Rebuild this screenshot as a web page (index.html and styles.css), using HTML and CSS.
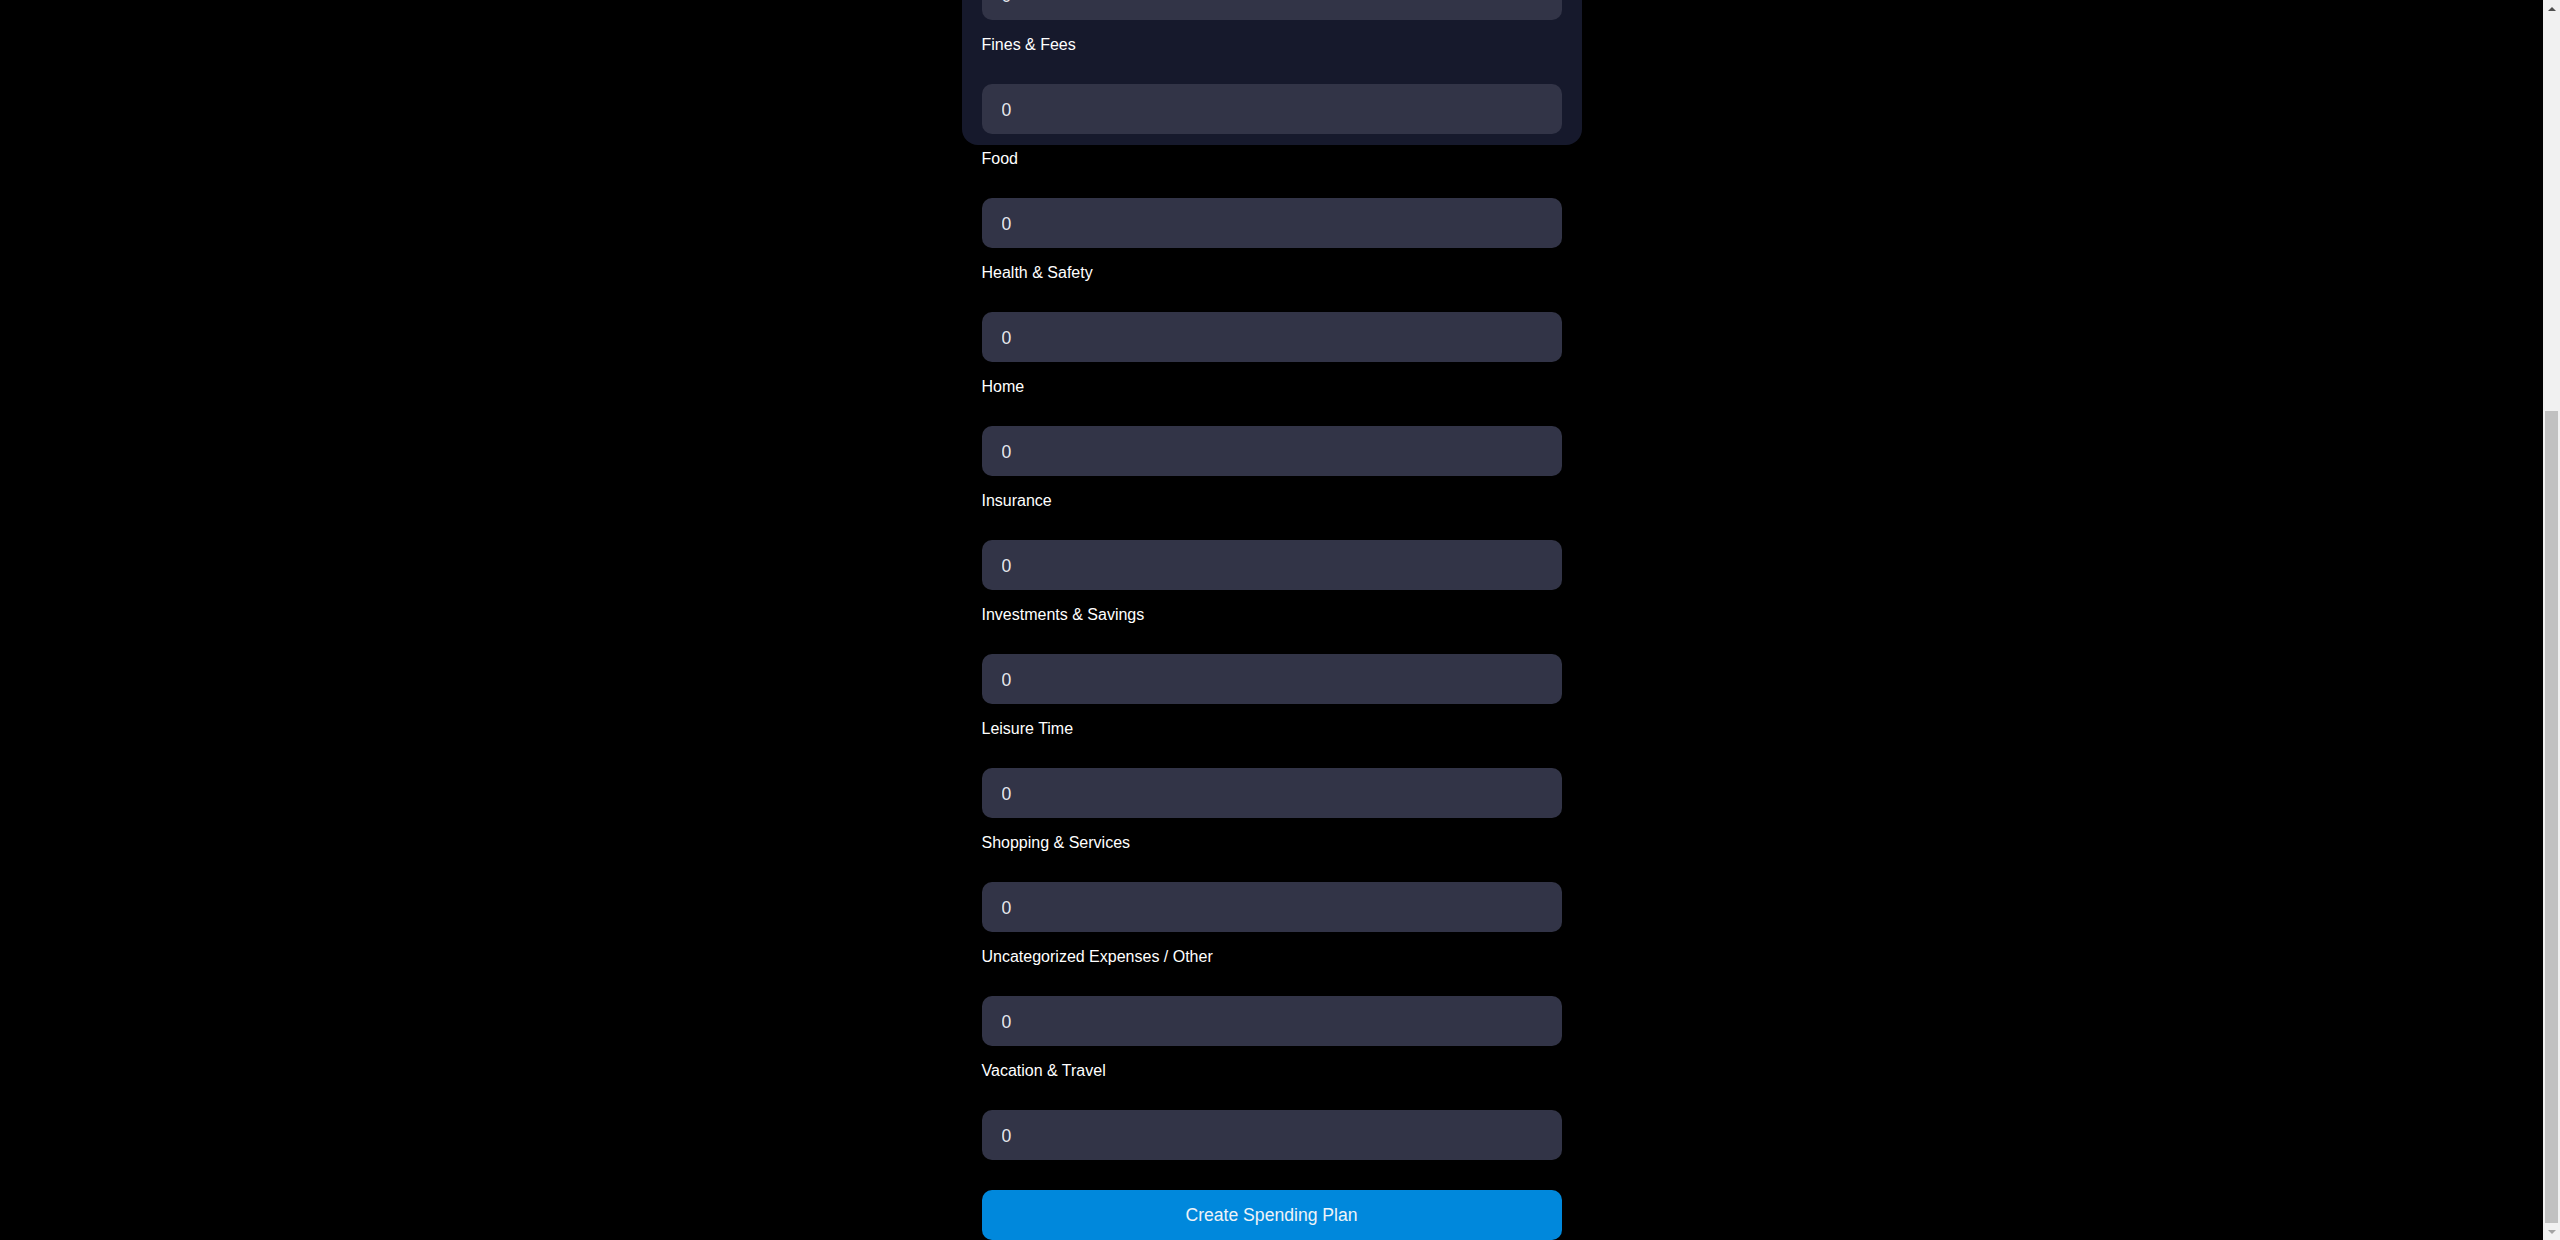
FILE: index.html
```html
<!DOCTYPE html>
<html lang="en">
<head>
<meta charset="utf-8">
<title>Spending Plan</title>
<link rel="stylesheet" href="styles.css">
</head>
<body>
<div class="viewport">
  <main class="page">
    <section class="card">
      <form class="plan-form">
        <div class="field field-partial"><input class="field-input" type="text" value="0" aria-label="Entertainment"></div>
        <div class="field"><label class="field-label">Fines &amp; Fees</label><input class="field-input" type="text" value="0"></div>
        <div class="field"><label class="field-label">Food</label><input class="field-input" type="text" value="0"></div>
        <div class="field"><label class="field-label">Health &amp; Safety</label><input class="field-input" type="text" value="0"></div>
        <div class="field"><label class="field-label">Home</label><input class="field-input" type="text" value="0"></div>
        <div class="field"><label class="field-label">Insurance</label><input class="field-input" type="text" value="0"></div>
        <div class="field"><label class="field-label">Investments &amp; Savings</label><input class="field-input" type="text" value="0"></div>
        <div class="field"><label class="field-label">Leisure Time</label><input class="field-input" type="text" value="0"></div>
        <div class="field"><label class="field-label">Shopping &amp; Services</label><input class="field-input" type="text" value="0"></div>
        <div class="field"><label class="field-label">Uncategorized Expenses / Other</label><input class="field-input" type="text" value="0"></div>
        <div class="field"><label class="field-label">Vacation &amp; Travel</label><input class="field-input" type="text" value="0"></div>
        <button class="submit-btn" type="button">Create Spending Plan</button>
      </form>
    </section>
  </main>
</div>
<div class="scrollbar" aria-hidden="true">
  <div class="sb-btn"><span class="sb-arrow sb-up"></span></div>
  <div class="sb-track"><div class="sb-thumb"></div></div>
  <div class="sb-btn"><span class="sb-arrow sb-down"></span></div>
</div>
</body>
</html>
```

FILE: styles.css
```css
html {
  background: #000;
}

body {
  margin: 0;
  height: 100vh;
  display: flex;
  overflow: hidden;
  background: #000;
  font-family: "Liberation Sans", Arial, sans-serif;
  color: #fff;
}

.viewport {
  flex: 1;
  min-width: 0;
  overflow: hidden;
}

.page {
  width: 620px;
  margin: 0 auto;
}

.card {
  box-sizing: border-box;
  height: 175px;
  margin-top: -30px;
  background: #16192c;
  border-radius: 0 0 16px 16px;
  padding: 0 20px;
}

.plan-form {
  display: flex;
  flex-direction: column;
}

.field {
  display: flex;
  flex-direction: column;
}

.field-label {
  display: block;
  margin-top: 16px;
  margin-bottom: 30px;
  font-size: 16px;
  line-height: 18px;
  color: #fff;
}

.field-input {
  box-sizing: border-box;
  display: block;
  width: 100%;
  height: 50px;
  margin: 0;
  padding: 2px 20px 0;
  background: #323447;
  border: none;
  border-radius: 10px;
  font-family: "Liberation Sans", Arial, sans-serif;
  font-size: 17.6px;
  color: #e6e8ee;
  outline: none;
}

.submit-btn {
  box-sizing: border-box;
  width: 100%;
  height: 50px;
  margin-top: 30px;
  background: #0088dc;
  border: none;
  border-radius: 10px;
  font-family: "Liberation Sans", Arial, sans-serif;
  font-size: 17.6px;
  color: #eef3f8;
  cursor: pointer;
}

/* browser scrollbar (page is scrolled to its end) */
.scrollbar {
  width: 17px;
  flex: none;
  display: flex;
  flex-direction: column;
  background: #f1f1f1;
}

.sb-btn {
  height: 17px;
  flex: none;
  display: flex;
  align-items: center;
  justify-content: center;
}

.sb-arrow {
  width: 0;
  height: 0;
  border-left: 4px solid transparent;
  border-right: 4px solid transparent;
}

.sb-up {
  border-bottom: 4px solid #505050;
}

.sb-down {
  border-top: 4px solid #a3a3a3;
}

.sb-track {
  flex: 1;
  display: flex;
  flex-direction: column;
  padding-top: 394px;
}

.sb-thumb {
  flex: 1;
  margin: 0 2px;
  background: #c1c1c1;
}
```
